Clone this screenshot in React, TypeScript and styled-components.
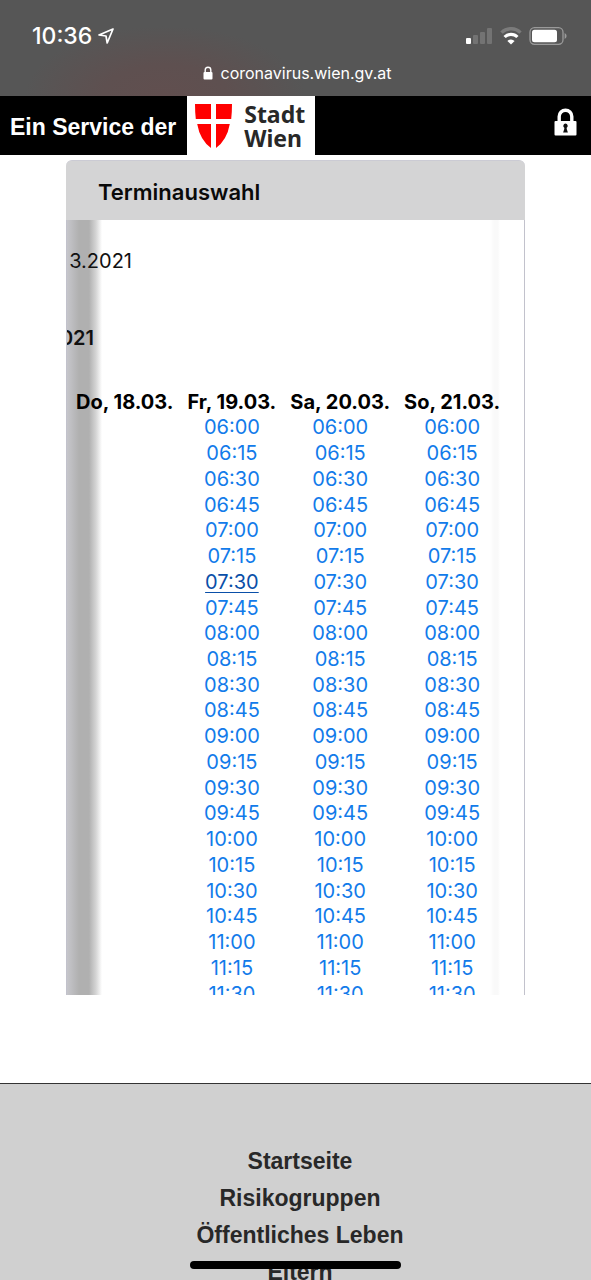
import React from "react";
import styled, { createGlobalStyle } from "styled-components";

const GlobalStyle = createGlobalStyle`
  * { box-sizing: border-box; }
  body { margin: 0; background: #fff; }
`;

const ui = `"Inter", "Liberation Sans", sans-serif`;
const arial = `"Liberation Sans", Arial, sans-serif`;

const Screen = styled.div`
  position: relative;
  display: flex;
  flex-direction: column;
  height: 100vh;
  overflow: hidden;
  font-family: ${ui};
`;

const BrowserBar = styled.header`
  flex: none;
  height: 96px;
  padding-top: 20px;
  color: #fff;
  background: radial-gradient(ellipse 140px 70px at 165px 96px, #614f4f 0%, #5e5050 45%, #565656 100%);
`;

const StatusRow = styled.div`
  display: flex;
  align-items: center;
  justify-content: space-between;
  height: 32px;
  padding: 0 24px 0 32px;
`;

const Clock = styled.div`
  display: flex;
  align-items: center;
  gap: 6px;
  font-size: 23px;
  font-weight: 500;
`;

const Indicators = styled.div`
  display: flex;
  align-items: center;
  gap: 7px;
`;

const Address = styled.div`
  display: flex;
  align-items: center;
  justify-content: center;
  gap: 8px;
  height: 42px;
  font-size: 16px;
  padding-left: 3px;
`;

const ServiceBar = styled.div`
  flex: none;
  display: flex;
  align-items: center;
  height: 59px;
  padding: 0 14px 0 10px;
  background: #000;
  color: #fff;
  font: bold 23px/28px ${arial};
`;

const ServiceText = styled.span`
  padding-top: 2px;
  margin-right: 11px;
`;

const Logo = styled.a`
  display: flex;
  align-items: center;
  gap: 12px;
  width: 128px;
  height: 59px;
  padding-left: 8px;
  background: #fff;
  color: #282828;
  text-decoration: none;
  font: 700 23px/24px "Noto Sans", sans-serif;
`;

const LockButton = styled.button`
  display: flex;
  margin-left: auto;
  padding: 0 0 8px;
  border: 0;
  background: none;
  color: #fff;
`;

const Card = styled.main`
  flex: none;
  display: flex;
  flex-direction: column;
  height: calc(100vh - 440px);
  margin: 5px 66px 0;
`;

const CardTitle = styled.h1`
  flex: none;
  margin: 0;
  padding: 4px 32px 0;
  border-radius: 6px 6px 0 0;
  border-top: 1px solid #cbcbd4;
  background: #d4d4d5;
  color: #0a0a0a;
  font-size: 22px;
  font-weight: 600;
  line-height: 55px;
`;

const ScrollArea = styled.section`
  flex: none;
  height: calc(100vh - 505px);
  overflow: hidden;
  padding: 16px 0 0;
  border-left: 1px solid #c2c2cc;
  border-right: 1px solid #c2c2cc;
  background:
    linear-gradient(90deg, #c6c6cb 0, #b0b0b0 12px, #b0b0b0 22px, #d5d5d5 29px, #fff 35px) left / 35px 100% no-repeat,
    linear-gradient(90deg, #fff 0, #f9f9f9 4px, #f9f9f9 8px, #fff 10px) right 24px top / 10px 100% no-repeat,
    #fff;
`;

const DateLine = styled.p<{ $width: number; $bold?: boolean }>`
  display: flex;
  justify-content: flex-end;
  width: ${(p) => p.$width}px;
  margin: 0 0 26px;
  overflow: hidden;
  color: #111;
  font-size: 20px;
  font-weight: ${(p) => (p.$bold ? 600 : 400)};
  line-height: 51px;
`;

const Slots = styled.table`
  height: 617px;
  margin: 0 0 0 2px;
  border-collapse: collapse;
  font-size: 20px;
  line-height: 25px;
  text-align: center;
`;

const Day = styled.th`
  padding: 0 7px;
  color: #000;
  font-weight: 700;
  white-space: nowrap;
`;

const Slot = styled.td`
  padding: 0;
`;

const TimeLink = styled.a<{ $active?: boolean }>`
  color: ${(p) => (p.$active ? "#0a4fa8" : "#127bea")};
  text-decoration: ${(p) => (p.$active ? "underline" : "none")};
  text-decoration-thickness: 1px;
  text-underline-offset: 3px;
`;

const Footer = styled.footer`
  flex: none;
  margin-top: 83px;
  min-height: 197px;
  padding: 59px 0 0 9px;
  border-top: 1px solid #333;
  background: #d0d0d0;
`;

const Menu = styled.ul`
  margin: 0;
  padding: 0;
  list-style: none;
  text-align: center;
  font: bold 23px/37px ${arial};
`;

const MenuLink = styled.a`
  color: #282828;
  text-decoration: none;
`;

const HomeIndicator = styled.div`
  position: absolute;
  bottom: 11px;
  left: 50%;
  width: 211px;
  height: 8px;
  margin-left: -106px;
  border-radius: 4px;
  background: #000;
`;

const days = ["Do, 18.03.", "Fr, 19.03.", "Sa, 20.03.", "So, 21.03."];
const times = Array.from({ length: 23 }, (_, i) => {
  const minutes = 360 + i * 15;
  const pad = (n: number) => String(n).padStart(2, "0");
  return `${pad(Math.floor(minutes / 60))}:${pad(minutes % 60)}`;
});
const menu = ["Startseite", "Risikogruppen", "Öffentliches Leben", "Eltern"];

const LocationArrow = () => (
  <svg width="16" height="16" viewBox="0 0 16 16" fill="none" stroke="#fff" strokeWidth="1.7" strokeLinejoin="round">
    <path d="M15 1 1 7 8 8 9.2 15Z" />
  </svg>
);

const Signal = () => (
  <svg width="28" height="18" viewBox="0 0 28 18">
    <rect x="1" y="11" width="5" height="6" rx="1" fill="#fff" />
    <rect x="8" y="8" width="5" height="9" rx="1" fill="#737373" />
    <rect x="15" y="5" width="5" height="12" rx="1" fill="#737373" />
    <rect x="22" y="1" width="5" height="16" rx="1" fill="#737373" />
  </svg>
);

const Wifi = () => (
  <svg width="22" height="18" viewBox="0 0 22 18" fill="none">
    <path d="M1.5 5.6a13.5 13.5 0 0 1 19 0" stroke="#7b7b7b" strokeWidth="3.4" />
    <path d="M4.6 10a9 9 0 0 1 12.8 0" stroke="#fff" strokeWidth="3.2" />
    <path d="M7.4 14a5 5 0 0 1 7.2 0L11 17.6Z" fill="#fff" />
  </svg>
);

const Battery = () => (
  <svg width="38" height="18" viewBox="0 0 38 18">
    <rect x="1" y="0.7" width="33" height="16.6" rx="4.5" fill="none" stroke="#9a9a9a" strokeWidth="1.3" />
    <rect x="3" y="2.8" width="25" height="12.4" rx="2.5" fill="#fff" />
    <path d="M35.6 6v6q2-1 2-3t-2-3Z" fill="#9a9a9a" />
  </svg>
);

const SmallLock = () => (
  <svg width="10" height="14" viewBox="0 0 10 14">
    <path d="M2.2 7V4a2.8 2.8 0 0 1 5.6 0v3" fill="none" stroke="#fff" strokeWidth="1.4" />
    <rect x="0.5" y="6" width="9" height="7.6" rx="1" fill="#fff" />
  </svg>
);

const BigLock = () => (
  <svg width="23" height="28" viewBox="0 0 23 28">
    <path d="M5.2 14V8.5a6.3 6.3 0 0 1 12.6 0V14" fill="none" stroke="#fff" strokeWidth="3.4" />
    <rect x="0.5" y="13" width="22" height="14.5" rx="1" fill="#fff" />
    <path d="M11.5 15.5a2.3 2.3 0 0 1 1.2 4.2v1.3l1.2 3.6H9.1l1.2-3.6v-1.3a2.3 2.3 0 0 1 1.2-4.2Z" fill="#111" />
  </svg>
);

const Shield = () => (
  <svg width="37" height="44" viewBox="0 0 37 44" fill="#f00">
    <path d="M0 0H16V15H.8Q0 8 0 0ZM21 0H37Q37 8 36.2 15H21ZM2.2 20H16V44Q5 36 2.2 20ZM21 20H34.8Q32 36 21 44Z" />
  </svg>
);

export default function App() {
  return (
    <Screen>
      <GlobalStyle />
      <BrowserBar>
        <StatusRow>
          <Clock>
            10:36
            <LocationArrow />
          </Clock>
          <Indicators>
            <Signal />
            <Wifi />
            <Battery />
          </Indicators>
        </StatusRow>
        <Address>
          <SmallLock />
          coronavirus.wien.gv.at
        </Address>
      </BrowserBar>
      <ServiceBar>
        <ServiceText>Ein Service der</ServiceText>
        <Logo href="#">
          <Shield />
          <span>
            Stadt
            <br />
            Wien
          </span>
        </Logo>
        <LockButton aria-label="Login">
          <BigLock />
        </LockButton>
      </ServiceBar>
      <Card>
        <CardTitle>Terminauswahl</CardTitle>
        <ScrollArea>
          <DateLine $width={65}>3.2021</DateLine>
          <DateLine $width={27} $bold>
            021
          </DateLine>
          <Slots>
            <thead>
              <tr>
                {days.map((day) => (
                  <Day key={day} scope="col">
                    {day}
                  </Day>
                ))}
              </tr>
            </thead>
            <tbody>
              {times.map((time) => (
                <tr key={time}>
                  {days.map((day, column) => (
                    <Slot key={day}>
                      {column > 0 && (
                        <TimeLink href="#" $active={column === 1 && time === "07:30"}>
                          {time}
                        </TimeLink>
                      )}
                    </Slot>
                  ))}
                </tr>
              ))}
            </tbody>
          </Slots>
        </ScrollArea>
      </Card>
      <Footer>
        <Menu>
          {menu.map((item) => (
            <li key={item}>
              <MenuLink href="#">{item}</MenuLink>
            </li>
          ))}
        </Menu>
      </Footer>
      <HomeIndicator />
    </Screen>
  );
}
